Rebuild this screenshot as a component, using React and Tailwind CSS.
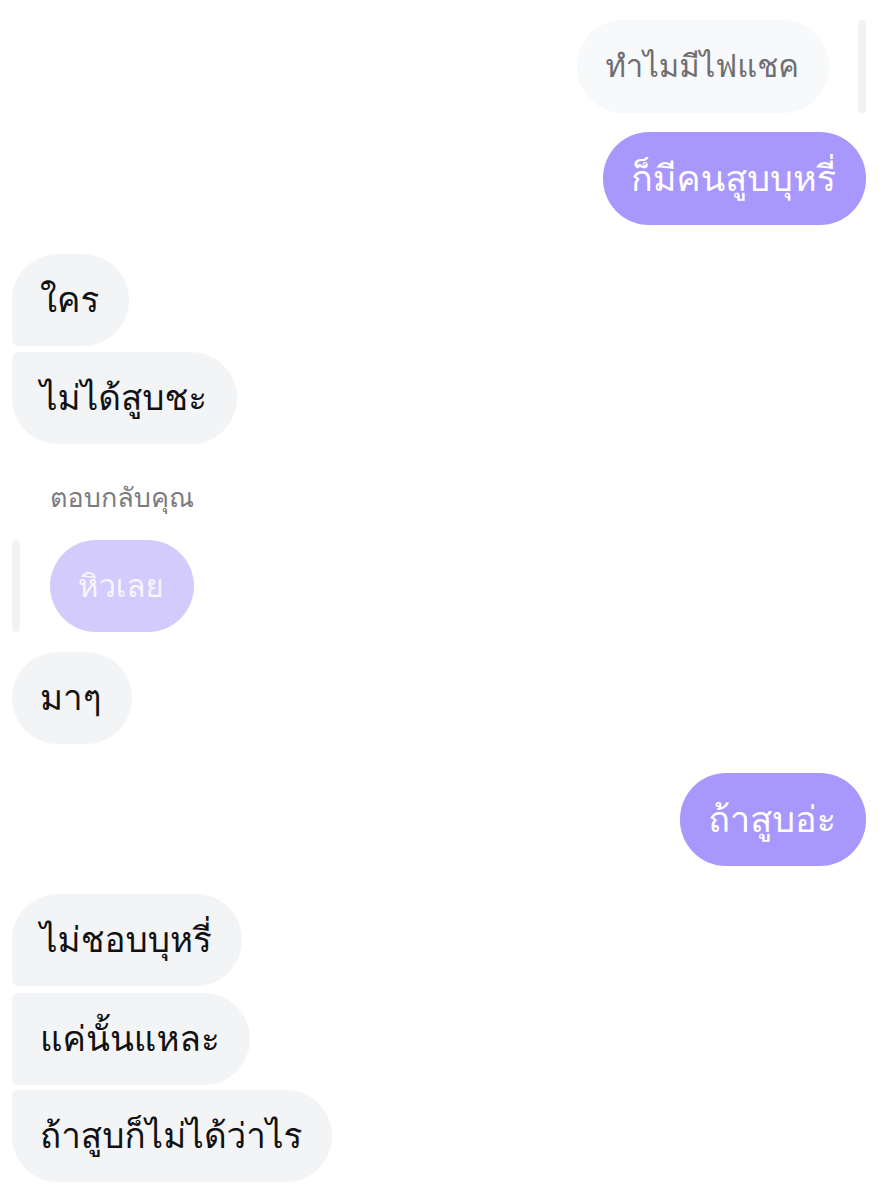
import React from 'react';

// corner shape for left-side bubbles by position in a group
const leftShape = {
  single: 'rounded-[46px]',
  first: 'rounded-[46px] rounded-bl-[6px]',
  middle: 'rounded-[46px] rounded-tl-[6px] rounded-bl-[6px]',
  last: 'rounded-[46px] rounded-tl-[6px]',
};

function Theirs({ text, pos = 'single', className = '' }) {
  return (
    <div className={`flex ${className}`}>
      <div className={`h-[92px] flex items-center pl-7 pr-[30px] bg-[#f3f4f6] text-[#111111] text-[35px] ${leftShape[pos]}`}>
        {text}
      </div>
    </div>
  );
}

function Mine({ text, className = '' }) {
  return (
    <div className={`flex justify-end ${className}`}>
      <div className="h-[93px] flex items-center pl-7 pr-[30px] bg-[#a897fc] text-white text-[36px] rounded-[46px]">
        {text}
      </div>
    </div>
  );
}

export default function App() {
  return (
    <div className="w-[885px] h-[1200px] bg-white pl-3 pr-[19px] pt-5 overflow-hidden font-[Loma,'DejaVu_Sans',sans-serif]">
      {/* quoted reply on my side */}
      <div className="flex justify-end items-stretch gap-[29px]">
        <div className="h-[93px] flex items-center pl-7 pr-[30px] bg-[#f8f9fa] text-[#6e6e73] text-[31px] rounded-[46px]">
          ทำไมมีไฟแชค
        </div>
        <div className="w-2 rounded-full bg-[#f1f2f4]" />
      </div>
      <Mine text="ก็มีคนสูบบุหรี่" className="mt-[19px]" />

      <Theirs text="ใคร" pos="first" className="mt-[29px]" />
      <Theirs text="ไม่ได้สูบชะ" pos="last" className="mt-[6px]" />

      <div className="mt-[38px] pl-[38px] text-[27px] text-[#7c7c80] leading-[32px]">ตอบกลับคุณ</div>
      <div className="flex items-stretch gap-[30px] mt-[26px]">
        <div className="w-2 rounded-full bg-[#f1f2f4]" />
        <div className="h-[92px] flex items-center pl-7 pr-[30px] bg-[#d4cbfd] text-[#f7f5ff] text-[31px] rounded-[46px]">
          หิวเลย
        </div>
      </div>
      <Theirs text="มาๆ" className="mt-[20px]" />

      <Mine text="ถ้าสูบอ่ะ" className="mt-[29px]" />

      <Theirs text="ไม่ชอบบุหรี่" pos="first" className="mt-[28px]" />
      <Theirs text="แค่นั้นแหละ" pos="middle" className="mt-[7px]" />
      <Theirs text="ถ้าสูบก็ไม่ได้ว่าไร" pos="last" className="mt-[5px]" />
    </div>
  );
}
